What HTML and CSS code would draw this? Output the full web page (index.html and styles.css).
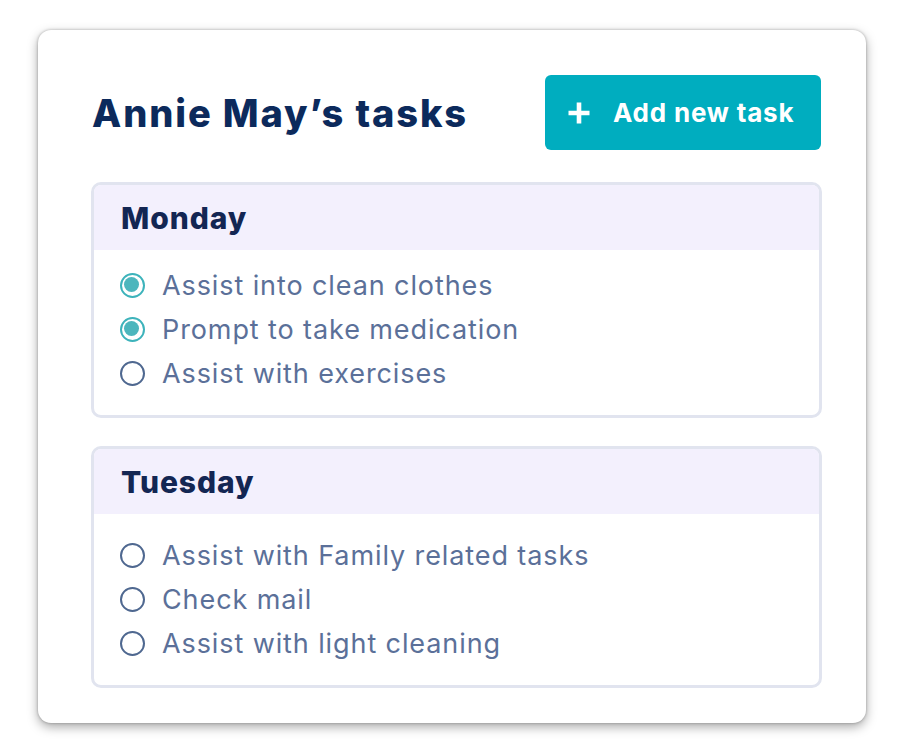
FILE: index.html
```
<!DOCTYPE html>
<html>
<head>
<meta charset="utf-8">
<link rel="stylesheet" href="styles.css">
</head>
<body>
<div class="card">
  <div class="top">
    <h1 class="title">Annie May’s tasks</h1>
    <button class="add-btn">
      <svg class="plus" width="24" height="24" viewBox="0 0 24 24"><path d="M12 1.5V22.5M1.5 12H22.5" stroke="#fff" stroke-width="4.6" fill="none"/></svg>
      <span>Add new task</span>
    </button>
  </div>
  <section class="day">
    <h2 class="day-head">Monday</h2>
    <ul class="tasks tasks-mon">
      <li class="task"><span class="radio checked"></span>Assist into clean clothes</li>
      <li class="task"><span class="radio checked"></span>Prompt to take medication</li>
      <li class="task"><span class="radio"></span>Assist with exercises</li>
    </ul>
  </section>
  <section class="day">
    <h2 class="day-head">Tuesday</h2>
    <ul class="tasks tasks-tue">
      <li class="task"><span class="radio"></span>Assist with Family related tasks</li>
      <li class="task"><span class="radio"></span>Check mail</li>
      <li class="task"><span class="radio"></span>Assist with light cleaning</li>
    </ul>
  </section>
</div>
</body>
</html>
```
FILE: styles.css
```
* { box-sizing: border-box; }
html, body { margin: 0; padding: 0; background: #fff; }
body {
  padding: 30px 44px 25px 38px;
  font-family: Inter, "Noto Sans", sans-serif;
}
.card {
  width: 828px;
  height: 693px;
  background: #fff;
  border-radius: 13px;
  box-shadow: 0 4px 11px rgba(0,0,0,0.34), 0 0 3px rgba(0,0,0,0.28);
  padding: 45px 44px 0 53px;
  display: flex;
  flex-direction: column;
  gap: 28px;
}
.top {
  display: flex;
  align-items: center;
  justify-content: space-between;
  margin-bottom: 4px;
}
.title {
  margin: 0 0 0 1px;
  font-size: 38px;
  font-weight: 800;
  color: #0c2a5c;
  letter-spacing: 1.9px;
}
.add-btn {
  width: 276px;
  height: 75px;
  border: none;
  border-radius: 6px;
  background: #00adbf;
  color: #fff;
  font-family: Inter, sans-serif;
  font-size: 26px;
  font-weight: 700;
  letter-spacing: 0.8px;
  display: flex;
  align-items: center;
  padding: 0 0 0 22px;
  gap: 22px;
  margin-right: 1px;
}
.plus { display: block; }
.day {
  border: 3px solid #e1e4ef;
  border-radius: 10px;
  overflow: hidden;
}
.day-head {
  margin: 0;
  height: 65px;
  background: #f3f0fd;
  padding: 0 0 0 27px;
  display: flex;
  align-items: center;
  font-size: 30px;
  font-weight: 800;
  letter-spacing: 0.9px;
  color: #132653;
}
.tasks {
  list-style: none;
  margin: 0;
  padding: 13px 0 20px 26px;
}
.tasks-tue { padding-top: 19px; }
.task {
  height: 44px;
  display: flex;
  align-items: center;
  gap: 17px;
  font-size: 27px;
  letter-spacing: 0.9px;
  color: #5b7099;
}
.radio {
  width: 25px;
  height: 25px;
  border-radius: 50%;
  border: 2.7px solid #4f6890;
  flex: none;
  position: relative;
}
.radio.checked {
  border-color: #3db3bb;
}
.radio.checked::after {
  content: "";
  position: absolute;
  left: 2.3px;
  top: 2.3px;
  width: 15px;
  height: 15px;
  border-radius: 50%;
  background: #4cb6bd;
}
```
